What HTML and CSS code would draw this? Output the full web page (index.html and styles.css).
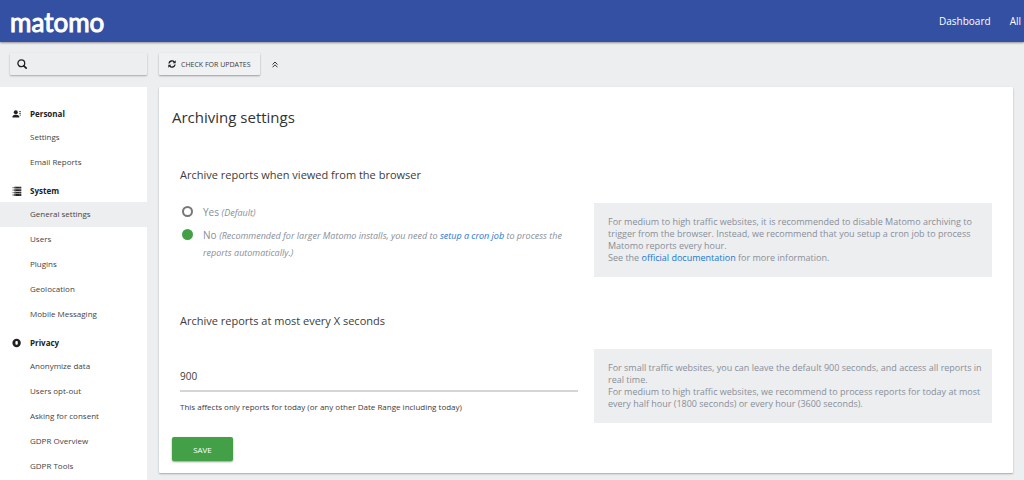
FILE: index.html
```
<!DOCTYPE html>
<html lang="en">
<head>
<meta charset="utf-8">
<title>General settings - Matomo</title>
<link rel="stylesheet" href="styles.css">
</head>
<body>
<header class="topbar">
  <a class="logo" href="#">matomo</a>
  <nav class="topnav">
    <a href="#">Dashboard</a>
    <a href="#">All</a>
  </nav>
</header>
<div class="page">
  <aside class="side">
    <label class="search">
      <svg viewBox="0 0 10 10" width="10" height="10" aria-hidden="true"><circle cx="4.3" cy="4.3" r="3.4" fill="none" stroke="#212121" stroke-width="1.3"/><path d="M6.8 6.8 9.2 9.2" stroke="#212121" stroke-width="1.7" stroke-linecap="round"/></svg>
      <input type="text" aria-label="Search">
    </label>
    <nav class="menu">
      <h3 class="menu-head">
        <svg viewBox="0 0 10 8" width="10" height="8" aria-hidden="true"><circle cx="3.8" cy="2.3" r="2" fill="#212121"/><path d="M.5 7.5V6.4Q1 5 2.9 4.8H4.7Q6.7 5 7.2 6.4V7.5Z" fill="#212121"/><path d="M7 1.6H9M7 3.4H9M7.6 5.2H9" stroke="#555" stroke-width=".9"/></svg>
        Personal
      </h3>
      <a href="#">Settings</a>
      <a href="#">Email Reports</a>
      <h3 class="menu-head">
        <svg viewBox="0 0 10 10" width="10" height="10" aria-hidden="true"><path d="M.5 1.6H1.8M.5 4.1H1.8M.5 6.6H1.8M.5 9H1.8" stroke="#777" stroke-width="1.4"/><path d="M2.3 1.6H9.3M2.3 4.1H9.3M2.3 6.6H9.3M2.3 9H9.3" stroke="#212121" stroke-width="1.8"/><path d="M3.5 .7V9.8M7.9 .7V9.8" stroke="#888" stroke-width=".5"/></svg>
        System
      </h3>
      <a class="current" href="#">General settings</a>
      <a href="#">Users</a>
      <a href="#">Plugins</a>
      <a href="#">Geolocation</a>
      <a href="#">Mobile Messaging</a>
      <h3 class="menu-head">
        <svg viewBox="0 0 10 10" width="10" height="10" aria-hidden="true"><circle cx="4.6" cy="5" r="4.2" fill="#212121"/><rect x="3.4" y="3.1" width="2.4" height="3.6" rx="1" fill="#fff"/></svg>
        Privacy
      </h3>
      <a href="#">Anonymize data</a>
      <a href="#">Users opt-out</a>
      <a href="#">Asking for consent</a>
      <a href="#">GDPR Overview</a>
      <a href="#">GDPR Tools</a>
    </nav>
  </aside>
  <main class="main">
    <div class="tools">
      <button class="update" type="button">
        <svg viewBox="0 0 8 8" width="8" height="8" aria-hidden="true"><path d="M1 3.5A3 3 0 0 1 6.3 2M7 4.5A3 3 0 0 1 1.7 6" fill="none" stroke="#212121" stroke-width="1.4"/><path d="M7.7 .3V3.3H4.7ZM.3 7.7V4.7H3.3Z" fill="#212121"/></svg>
        CHECK FOR UPDATES
      </button>
      <button class="collapse" type="button" aria-label="Collapse">
        <svg viewBox="0 0 6 7" width="6" height="7" aria-hidden="true"><path d="M.5 3.5 3 1 5.5 3.5M.5 6.3 3 3.8 5.5 6.3" fill="none" stroke="#333" stroke-width="1"/></svg>
      </button>
    </div>
    <form class="card">
      <h2 class="card-title">Archiving settings</h2>
      <fieldset class="group">
        <legend class="group-title">Archive reports when viewed from the browser</legend>
        <div class="columns">
          <div class="radios">
            <div class="option">
              <input type="radio" name="archive" id="archive-yes">
              <label for="archive-yes">Yes <em>(Default)</em></label>
            </div>
            <div class="option">
              <input type="radio" name="archive" id="archive-no" checked>
              <label for="archive-no">No <em>(Recommended for larger Matomo installs, you need to <a href="#">setup a cron job</a> to process the reports automatically.)</em></label>
            </div>
          </div>
          <div class="help">For medium to high traffic websites, it is recommended to disable Matomo archiving to trigger from the browser. Instead, we recommend that you setup a cron job to process Matomo reports every hour.<br>See the <a href="#">official documentation</a> for more information.</div>
        </div>
      </fieldset>
      <div class="group group-last">
        <label class="group-title" for="seconds">Archive reports at most every X seconds</label>
        <div class="columns">
          <div class="field">
            <input type="text" id="seconds" value="900">
            <p class="note">This affects only reports for today (or any other Date Range including today)</p>
          </div>
          <div class="help">For small traffic websites, you can leave the default 900 seconds, and access all reports in real time.<br>For medium to high traffic websites, we recommend to process reports for today at most every half hour (1800 seconds) or every hour (3600 seconds).</div>
        </div>
      </div>
      <button class="save" type="button">SAVE</button>
    </form>
  </main>
</div>
</body>
</html>
```
FILE: styles.css
```
* {
  box-sizing: border-box;
}

body {
  margin: 0;
  min-height: 100vh;
  display: flex;
  flex-direction: column;
  background: #edeef0;
  color: #3c3c3c;
  font-family: "Open Sans", "Noto Sans", sans-serif;
  font-size: 8px;
}

a {
  color: #1976d2;
  text-decoration: none;
}

input,
button {
  font: inherit;
  color: inherit;
}

.topbar {
  display: flex;
  align-items: center;
  justify-content: space-between;
  height: 42px;
  padding: 0 3px 0 10px;
  background: #3450a3;
  box-shadow: 0 1px 2px rgba(0, 0, 0, 0.4);
}

.logo {
  padding-top: 2px;
  color: #fff;
  font-family: Lato, sans-serif;
  font-size: 26px;
  font-weight: 400;
  line-height: 32px;
  -webkit-text-stroke: 1px #fff;
}

.topnav {
  display: flex;
  gap: 19px;
  font-size: 10px;
}

.topnav a {
  color: #fff;
}

.page {
  flex: 1;
  display: flex;
  gap: 12px;
  padding-right: 11px;
}

.side {
  flex: 0 0 147px;
  min-width: 0;
  display: flex;
  flex-direction: column;
}

.search {
  display: flex;
  align-items: center;
  gap: 6px;
  height: 22px;
  margin: 11px 0 12px 10px;
  padding: 0 7px;
  border-radius: 1px;
  box-shadow: 0 1px 2px rgba(0, 0, 0, 0.3);
}

.search svg {
  flex: none;
}

.search input {
  flex: 1;
  min-width: 0;
  border: 0;
  padding: 0;
  background: none;
  outline: none;
}

.menu {
  flex: 1;
  padding-top: 11px;
  background: #fff;
}

.menu-head {
  display: flex;
  align-items: center;
  gap: 8px;
  margin: 0;
  padding: 5px 0 0 12px;
  color: #212121;
  font-size: 8px;
  font-weight: 700;
  line-height: 22px;
}

.menu a {
  display: block;
  padding: 0 0 2px 30px;
  color: #444;
  line-height: 23px;
}

.menu .current {
  background: #edeef0;
}

.main {
  flex: 1;
  min-width: 0;
}

.tools {
  display: flex;
  align-items: center;
  gap: 12px;
  margin: 11px 0 12px;
}

.update {
  display: flex;
  align-items: center;
  gap: 5px;
  height: 22px;
  padding: 0 9px;
  border: 0;
  border-radius: 1px;
  background: #f0f1f2;
  font-size: 7px;
  box-shadow: 0 1px 2px rgba(0, 0, 0, 0.35);
}

.collapse {
  display: flex;
  padding: 0;
  border: 0;
  background: none;
}

.card {
  padding: 20px 13px 12px;
  border-radius: 1px;
  background: #fff;
  box-shadow: 0 1px 2px rgba(0, 0, 0, 0.3);
}

.card-title {
  margin: 0 0 38px;
  color: #333;
  font-size: 15px;
  font-weight: 400;
  line-height: 20px;
}

.group {
  margin: 0 0 34px;
  padding: 0 8px;
  border: 0;
}

.group-last {
  margin-bottom: 14px;
}

.group-title {
  display: block;
  padding: 0;
  font-size: 11px;
  line-height: 20px;
}

.columns {
  display: grid;
  grid-template-columns: 1fr 1fr;
  gap: 16px;
  padding-top: 18px;
}

.help {
  padding: 13px 8px 13px 14px;
  background: #edeef0;
  color: #888e99;
  font-size: 9px;
  line-height: 12px;
}

.radios {
  padding-top: 1px;
}

.option {
  display: flex;
  align-items: flex-start;
  gap: 10px;
  margin-bottom: 6px;
  padding-left: 2px;
  color: #888e99;
  font-size: 10px;
  line-height: 17px;
}

.option em {
  font-size: 9px;
}

.option input {
  appearance: none;
  flex: none;
  width: 11px;
  height: 11px;
  margin: 2px 0 0;
  border: 2px solid #777;
  border-radius: 50%;
}

.option input:checked {
  border-color: #43a047;
  background: #43a047;
}

.field input {
  width: 100%;
  height: 32px;
  margin-top: 11px;
  padding: 2px 0 0;
  border: 0;
  border-bottom: 2px solid #d5d5d5;
  outline: none;
  font-size: 10px;
}

.note {
  margin: 9px 0 0;
  line-height: 12px;
}

.save {
  display: block;
  width: 61px;
  height: 24px;
  padding: 0;
  border: 0;
  border-radius: 2px;
  background: #43a047;
  color: #fff;
  box-shadow: 0 1px 2px rgba(0, 0, 0, 0.4);
}
```
